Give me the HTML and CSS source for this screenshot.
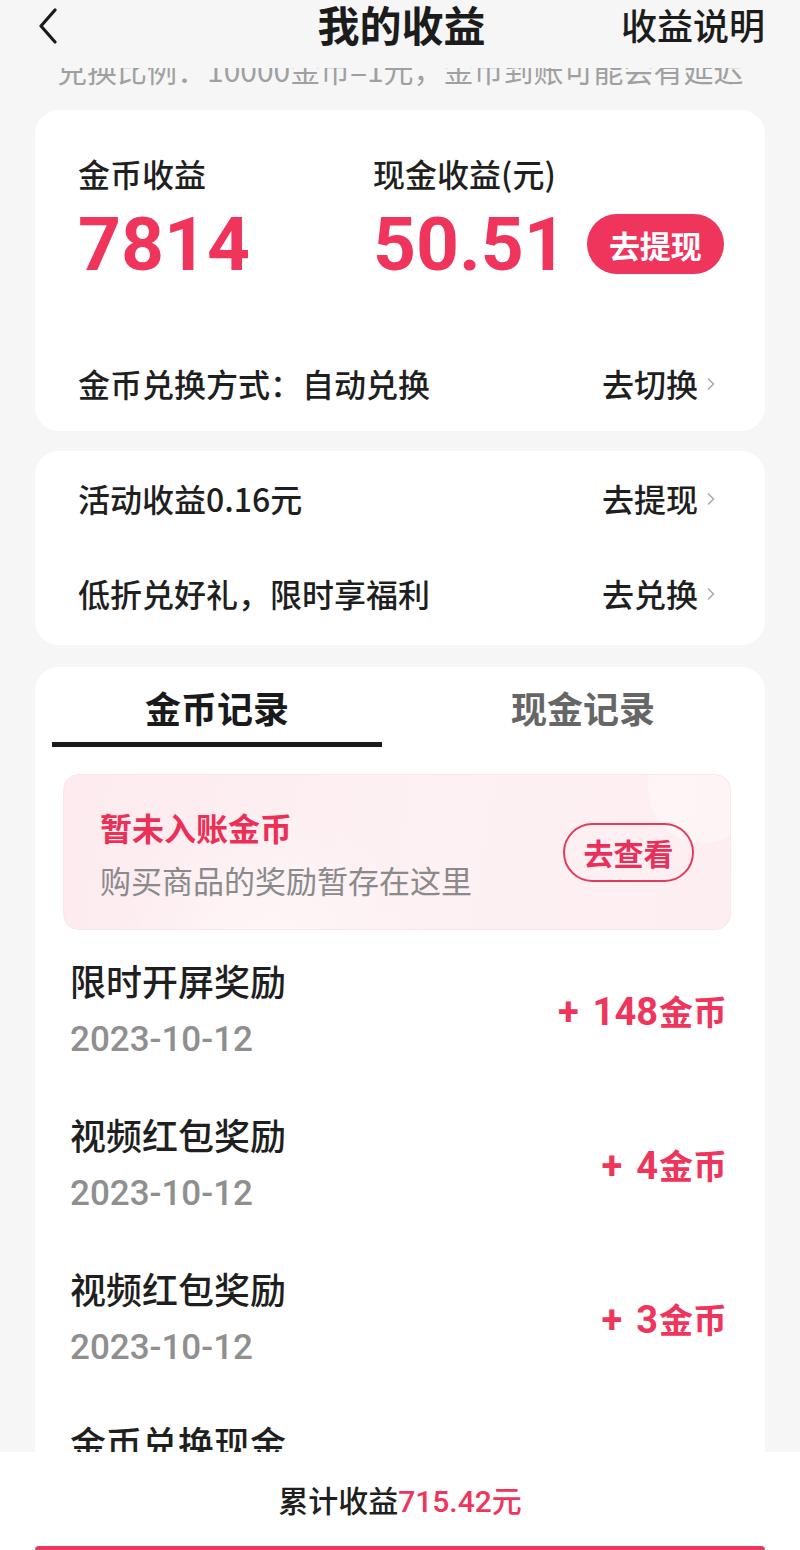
FILE: index.html
```html
<!DOCTYPE html>
<html lang="zh-CN">
<head>
<meta charset="utf-8">
<title>我的收益</title>
<link rel="stylesheet" href="styles.css">
</head>
<body>
<div class="page">
  <header class="topbar">
    <div class="back">
      <svg width="20" height="36" viewBox="0 0 20 36"><path d="M17 2 L3 18 L17 34" fill="none" stroke="#1c1c1c" stroke-width="3.2" stroke-linecap="round" stroke-linejoin="round"/></svg>
    </div>
    <h1 class="title">我的收益</h1>
    <div class="explain">收益说明</div>
  </header>

  <div class="notice"><span>兑换比例：10000金币=1元，金币到账可能会有延迟</span></div>

  <section class="card summary">
    <div class="stats">
      <div class="stat coin">
        <div class="stat-label">金币收益</div>
        <div class="stat-value">7814</div>
      </div>
      <div class="stat cash">
        <div class="stat-label">现金收益(元)</div>
        <div class="stat-line">
          <div class="stat-value">50.51</div>
          <button class="btn-withdraw">去提现</button>
        </div>
      </div>
    </div>
    <div class="row">
      <span class="row-text">金币兑换方式：自动兑换</span>
      <span class="row-link">去切换<svg class="chev" width="10" height="16" viewBox="0 0 10 16"><path d="M2.5 3 L7.5 8 L2.5 13" fill="none" stroke="#aaa" stroke-width="1.6" stroke-linecap="round" stroke-linejoin="round"/></svg></span>
    </div>
  </section>

  <section class="card links">
    <div class="row">
      <span class="row-text">活动收益0.16元</span>
      <span class="row-link">去提现<svg class="chev" width="10" height="16" viewBox="0 0 10 16"><path d="M2.5 3 L7.5 8 L2.5 13" fill="none" stroke="#aaa" stroke-width="1.6" stroke-linecap="round" stroke-linejoin="round"/></svg></span>
    </div>
    <div class="row">
      <span class="row-text">低折兑好礼，限时享福利</span>
      <span class="row-link">去兑换<svg class="chev" width="10" height="16" viewBox="0 0 10 16"><path d="M2.5 3 L7.5 8 L2.5 13" fill="none" stroke="#aaa" stroke-width="1.6" stroke-linecap="round" stroke-linejoin="round"/></svg></span>
    </div>
  </section>

  <section class="card records">
    <div class="tabs">
      <div class="tab active">金币记录</div>
      <div class="tab">现金记录</div>
    </div>

    <div class="pending">
      <div class="pending-text">
        <div class="pending-title">暂未入账金币</div>
        <div class="pending-sub">购买商品的奖励暂存在这里</div>
      </div>
      <button class="btn-view">去查看</button>
    </div>

    <ul class="list">
      <li class="item">
        <div class="item-main">
          <div class="item-name">限时开屏奖励</div>
          <div class="item-date">2023-10-12</div>
        </div>
        <div class="item-amount"><span class="sign">+</span>148<span class="cn">金币</span></div>
      </li>
      <li class="item">
        <div class="item-main">
          <div class="item-name">视频红包奖励</div>
          <div class="item-date">2023-10-12</div>
        </div>
        <div class="item-amount"><span class="sign">+</span>4<span class="cn">金币</span></div>
      </li>
      <li class="item">
        <div class="item-main">
          <div class="item-name">视频红包奖励</div>
          <div class="item-date">2023-10-12</div>
        </div>
        <div class="item-amount"><span class="sign">+</span>3<span class="cn">金币</span></div>
      </li>
      <li class="item">
        <div class="item-main">
          <div class="item-name">金币兑换现金</div>
          <div class="item-date">2023-10-12</div>
        </div>
        <div class="item-amount"><span class="sign">-</span>10000<span class="cn">金币</span></div>
      </li>
    </ul>
  </section>

  <footer class="footer">
    <div class="total">累计收益<span class="total-num">715.42</span><span class="total-unit">元</span></div>
    <div class="footer-btn"></div>
  </footer>
</div>
</body>
</html>
```

FILE: styles.css
```css
* { box-sizing: border-box; }
html, body { margin: 0; padding: 0; }
body {
  background: #f6f6f6;
  font-family: "Noto Sans CJK SC", "Noto Sans", sans-serif;
  color: #1f1f1f;
}
.page {
  width: 800px;
  height: 1550px;
  display: flex;
  flex-direction: column;
  overflow: hidden;
}

/* header */
.topbar {
  height: 68px;
  flex: none;
  display: grid;
  grid-template-columns: 1fr auto 1fr;
  align-items: start;
  padding: 0 35px 0 38px;
  background: #f6f6f6;
}
.back { display: flex; align-items: center; height: 48px; margin-top: 2px; }
.title {
  margin: 0;
  font-size: 42px;
  font-weight: 700;
  line-height: 48px;
  color: #1c1c1c;
}
.explain {
  justify-self: end;
  font-size: 36px;
  font-weight: 500;
  line-height: 48px;
  color: #1c1c1c;
}

.notice {
  height: 20px;
  flex: none;
  overflow: hidden;
  margin: 0 0 22px;
  padding-left: 57px;
}
.notice span {
  display: block;
  margin-top: -14px;
  font-size: 30px;
  line-height: 30px;
  color: #a0a0a0;
  white-space: nowrap;
}

/* cards */
.card {
  flex: none;
  background: #fff;
  margin: 0 35px;
  border-radius: 24px;
}
.summary {
  padding: 41px 49px 0 43px;
  margin-bottom: 20px;
}
.stats {
  display: grid;
  grid-template-columns: 295px 1fr;
}
.stat-label {
  font-size: 32px;
  line-height: 44px;
  font-weight: 500;
  color: #1f1f1f;
}
.stat-value {
  margin-top: 9px;
  font-family: Roboto, "Noto Sans CJK SC", sans-serif;
  font-weight: 700;
  font-size: 75px;
  line-height: 80px;
  color: #f0355c;
}
.stat-line {
  display: flex;
  align-items: center;
  gap: 20px;
}
.btn-withdraw {
  margin-top: 9px;
  width: 137px;
  height: 60px;
  border: none;
  border-radius: 30px;
  background: #f0355c;
  color: #fff;
  font-family: "Noto Sans CJK SC", sans-serif;
  font-size: 31px;
  font-weight: 700;
  padding: 0;
}
.summary .row {
  margin-top: 51px;
  height: 96px;
}
.row {
  height: 97px;
  display: flex;
  align-items: center;
  justify-content: space-between;
}
.row-text {
  font-size: 32px;
  font-weight: 500;
  color: #1f1f1f;
}
.row-link {
  display: flex;
  align-items: center;
  font-size: 32px;
  font-weight: 500;
  color: #1f1f1f;
}
.chev { margin-left: 8px; margin-top: 2px; }

.links {
  padding: 0 49px 0 43px;
  margin-bottom: 22px;
  height: 194px;
}
.links .row { margin-top: -2px; }

/* records */
.records {
  flex: 1 1 auto;
  min-height: 0;
  overflow: hidden;
  border-radius: 24px 24px 0 0;
  padding: 15px 17px 0;
}
.tabs {
  display: flex;
  gap: 36px;
}
.tab {
  width: 330px;
  text-align: center;
  font-size: 36px;
  font-weight: 700;
  line-height: 50px;
  padding-bottom: 10px;
  color: #666;
  border-bottom: 5px solid transparent;
}
.tab.active {
  color: #1a1a1a;
  border-bottom-color: #1a1a1a;
}

.pending {
  margin: 27px 17px 0 11px;
  height: 156px;
  border-radius: 16px;
  border: 1px solid #fbe6ea;
  background:
    radial-gradient(circle at 96% 8%, rgba(255,255,255,0.35) 0, rgba(255,255,255,0.35) 55px, rgba(255,255,255,0) 56px),
    radial-gradient(circle at 30% 120%, rgba(255,255,255,0.5) 0, rgba(255,255,255,0) 160px),
    linear-gradient(100deg, #fdebef 0%, #fdf1f3 55%, #fdeef1 100%);
  display: flex;
  align-items: center;
  justify-content: space-between;
  padding: 0 36px 0 36px;
}
.pending-text { display: flex; flex-direction: column; margin-top: 3px; }
.pending-title {
  font-size: 32px;
  font-weight: 700;
  line-height: 44px;
  color: #ec2f56;
}
.pending-sub {
  margin-top: 9px;
  font-size: 31px;
  line-height: 44px;
  color: #8a8a8a;
}
.btn-view {
  width: 131px;
  height: 59px;
  border: 2px solid #e23b5d;
  border-radius: 30px;
  background: transparent;
  color: #e8305a;
  font-family: "Noto Sans CJK SC", sans-serif;
  font-size: 30px;
  font-weight: 700;
  padding: 0;
}

.list {
  list-style: none;
  margin: 0;
  padding: 0 21px 0 18px;
}
.item {
  display: flex;
  align-items: center;
  justify-content: space-between;
  padding: 26px 0 22px;
}
.item-name {
  font-size: 36px;
  font-weight: 500;
  line-height: 48px;
  color: #1f1f1f;
}
.item-date {
  margin-top: 14px;
  font-family: Roboto, sans-serif;
  font-weight: 500;
  font-size: 35px;
  line-height: 44px;
  color: #8f8f8f;
}
.item-amount {
  display: flex;
  align-items: baseline;
  font-family: Roboto, "Noto Sans CJK SC", sans-serif;
  font-weight: 700;
  font-size: 38px;
  color: #f0355c;
  margin-top: 2px;
}
.item-amount .sign { margin-right: 14px; }
.item-amount .cn {
  font-family: "Noto Sans CJK SC", sans-serif;
  font-size: 34px;
  margin-left: 1px;
}

/* footer */
.footer {
  flex: none;
  height: 98px;
  background: #fff;
  display: flex;
  flex-direction: column;
  align-items: center;
  padding-top: 25px;
}
.total {
  font-size: 30px;
  line-height: 44px;
  font-weight: 500;
  color: #1f1f1f;
}
.total-num {
  font-family: Roboto, sans-serif;
  font-weight: 500;
  color: #f0355c;
}
.total-unit { color: #f0355c; }
.footer-btn {
  margin-top: auto;
  align-self: stretch;
  height: 4px;
  margin-left: 35px;
  margin-right: 35px;
  background: #e8385e;
  border-radius: 12px 12px 0 0;
}
```
